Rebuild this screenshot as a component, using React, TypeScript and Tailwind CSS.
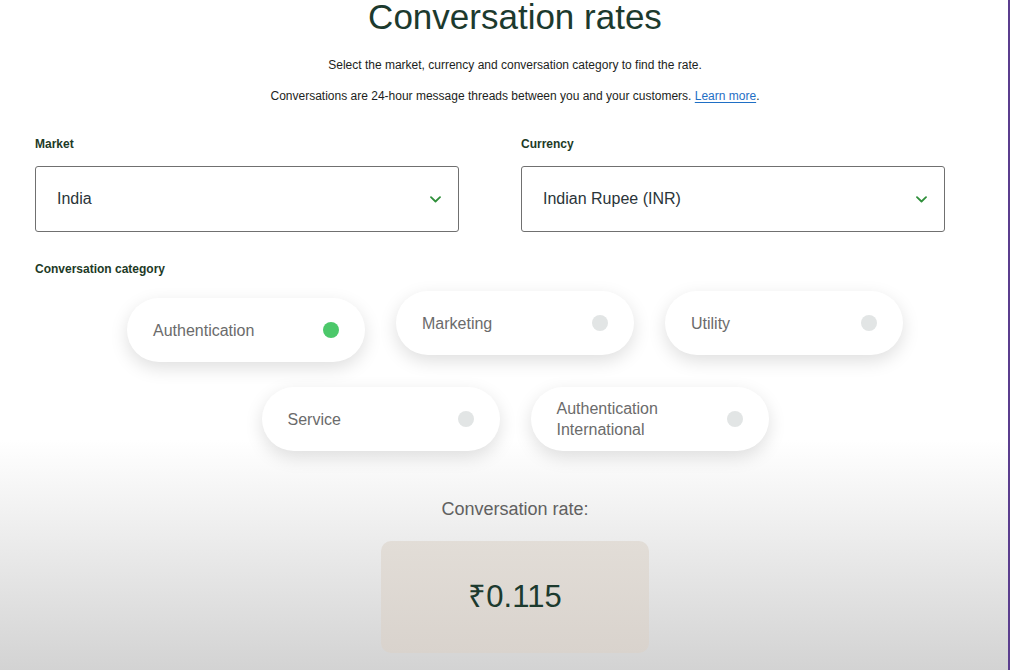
const categories = [
  { row: 1, label: "Authentication", active: true },
  { row: 1, label: "Marketing", active: false },
  { row: 1, label: "Utility", active: false },
  { row: 2, label: "Service", active: false },
  { row: 2, label: "Authentication International", active: false },
];

function Chevron() {
  return (
    <svg width="11" height="7" viewBox="0 0 11 7" fill="none">
      <path d="M1 1.2 5.5 5.5 10 1.2" stroke="#2f8f3a" strokeWidth="1.8" strokeLinecap="round" strokeLinejoin="round" />
    </svg>
  );
}

function SelectBox({ label, value }: { label: string; value: string }) {
  return (
    <div>
      <p className="text-[12px] font-bold leading-none text-[#1d3a26]">{label}</p>
      <div className="mt-[16px] flex h-[66px] items-center justify-between rounded-[3px] border border-[#707070] bg-white pl-[21px] pr-[17px]">
        <span className="text-[16px] text-[#2a3439]">{value}</span>
        <Chevron />
      </div>
    </div>
  );
}

function Pill({ label, active }: { label: string; active: boolean }) {
  return (
    <div
      className={`flex h-[64px] w-[238px] items-center justify-between rounded-full bg-white px-[26px] shadow-[0_6px_18px_rgba(0,0,0,0.13)] ${
        active ? "mt-[7px]" : ""
      }`}
    >
      <span className="max-w-[140px] text-[16px] leading-[21px] text-[#6b6b6b]">{label}</span>
      <span
        className={`h-[16px] w-[16px] shrink-0 rounded-full ${active ? "bg-[#4cc86a]" : "bg-[#e2e5e5]"}`}
      />
    </div>
  );
}

export default function App() {
  return (
    <div className="h-[670px] w-[1010px] overflow-hidden border-r-2 border-[#5b3e8e] bg-[linear-gradient(to_bottom,#ffffff_0px,#ffffff_440px,#d3d3d3_670px)] font-['Liberation_Sans',Arial,sans-serif]">
      <div className="pl-[22px] text-center">
        <h1 className="mt-[-1px] text-[35px] leading-none text-[#1c3a2e]">Conversation rates</h1>
        <p className="mt-[24px] text-[12px] leading-[14px] text-[#1c1e21]">
          Select the market, currency and conversation category to find the rate.
        </p>
        <p className="mt-[17px] text-[12px] leading-[14px] text-[#1c1e21]">
          Conversations are 24-hour message threads between you and your customers.{" "}
          <span className="text-[#1f6fc5] underline underline-offset-2">Learn more</span>.
        </p>
      </div>

      <div className="ml-[35px] mt-[35px] grid w-[910px] grid-cols-2 gap-[62px]">
        <SelectBox label="Market" value="India" />
        <SelectBox label="Currency" value="Indian Rupee (INR)" />
      </div>

      <p className="ml-[35px] mt-[31px] text-[12px] font-bold leading-none text-[#1d3a26]">
        Conversation category
      </p>

      <div className="pl-[22px]">
        <div className="mt-[16px] flex items-start justify-center gap-[31px]">
          {categories
            .filter((c) => c.row === 1)
            .map((c) => (
              <Pill key={c.label} label={c.label} active={c.active} />
            ))}
        </div>
        <div className="mt-[25px] flex justify-center gap-[31px]">
          {categories
            .filter((c) => c.row === 2)
            .map((c) => (
              <Pill key={c.label} label={c.label} active={c.active} />
            ))}
        </div>

        <p className="mt-[49px] text-center text-[18px] leading-none text-[#606060]">Conversation rate:</p>
        <div className="mx-auto mt-[23px] flex h-[112px] w-[268px] items-center justify-center rounded-[10px] bg-[linear-gradient(to_bottom,#e2ddd7,#d9d3cd)]">
          <span className="text-[31px] text-[#1c3a2e]">₹0.115</span>
        </div>
      </div>
    </div>
  );
}
